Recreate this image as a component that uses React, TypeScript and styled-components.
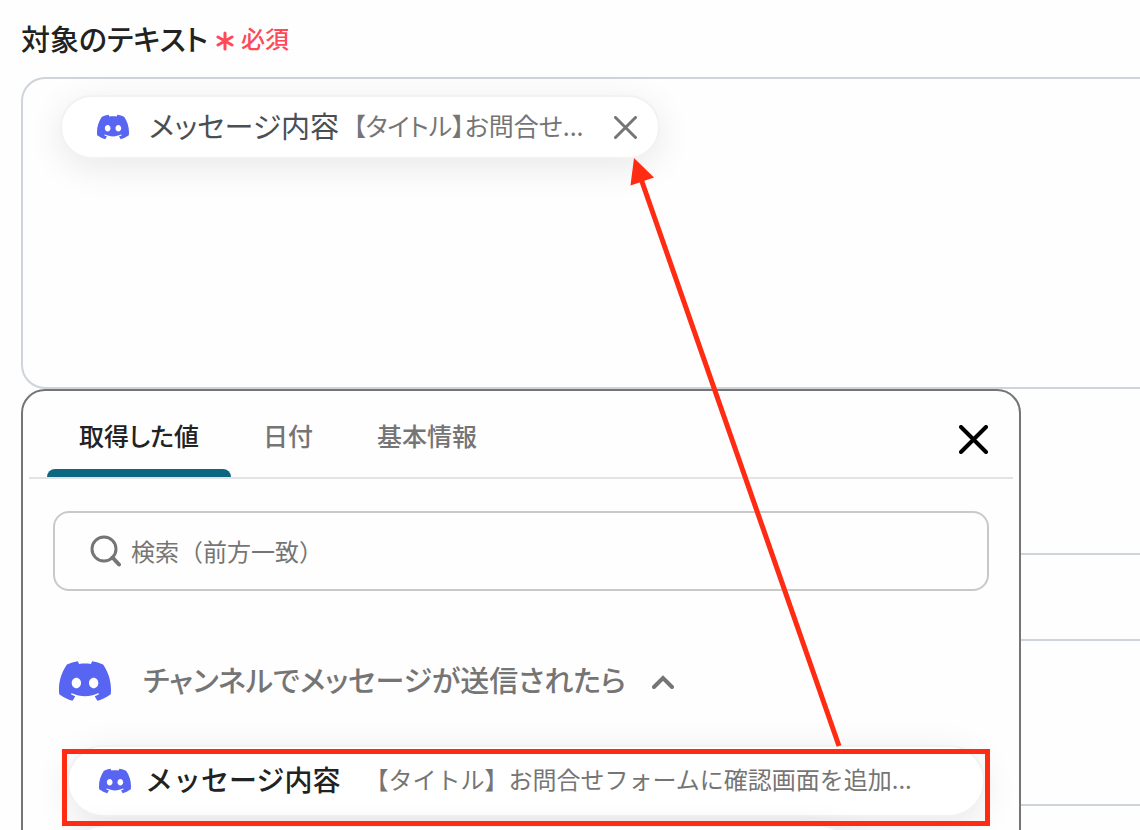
import React from "react";
import styled, { createGlobalStyle } from "styled-components";
import { SiDiscord } from "react-icons/si";

const color = {
  text: "#222222",
  slate: "#4a4f55",
  muted: "#757575",
  line: "#ced4da",
  required: "#ff4858",
  accent: "#0c6780",
  discord: "#5865f2",
  marker: "#ff2b12",
};

const GlobalStyle = createGlobalStyle`
  *, *::before, *::after { box-sizing: border-box; }
  body {
    margin: 0;
    background: #fefefe;
    color: ${color.text};
    font-family: "Noto Sans CJK JP", "Noto Sans", sans-serif;
    font-size: 24px;
    line-height: 36px;
  }
  button, input { font: inherit; color: inherit; }
`;

const Page = styled.main`
  position: relative;
  height: 100vh;
  overflow: hidden;
  padding: 18px 0 0 21px;
`;

const LabelRow = styled.div`
  display: flex;
  align-items: center;
  gap: 8px;
  height: 40px;
  margin-bottom: 19px;
`;

const FieldLabel = styled.h2`
  margin: 0;
  font-size: 29px;
  line-height: 40px;
  font-weight: 500;
  font-feature-settings: "palt";
`;

const Required = styled.span`
  display: flex;
  align-items: center;
  gap: 7px;
  color: ${color.required};
  font-weight: 500;

  svg {
    margin-top: 6px;
  }
`;

const TextArea = styled.div`
  display: flex;
  align-items: flex-start;
  height: 312px;
  padding: 16px 37px;
  border: 2px solid ${color.line};
  border-right: 0;
  border-radius: 24px 0 0 24px;
`;

const pill = `
  display: flex;
  align-items: center;
  border: 2px solid #f2f2f2;
  border-radius: 36px;
  background: #ffffff;
  box-shadow: 0 8px 36px rgba(0, 0, 0, 0.09);
`;

const Chip = styled.div`
  ${pill}
  width: 600px;
  height: 64px;
  padding: 0 21px 0 35px;
`;

const ChipName = styled.span`
  margin-left: 20px;
  padding-bottom: 4px;
  color: ${color.slate};
  font-size: 29px;
  font-feature-settings: "palt";
  white-space: nowrap;
`;

const ChipValue = styled.span`
  flex: 1;
  margin-left: 14px;
  padding-bottom: 4px;
  color: ${color.muted};
  font-size: 25px;
  font-feature-settings: "palt";
  white-space: nowrap;
`;

const IconButton = styled.button`
  display: flex;
  padding: 0;
  border: 0;
  background: none;
  cursor: pointer;
`;

const FormBody = styled.div`
  position: relative;
`;

const FormRow = styled.div<{ $height: number }>`
  height: ${(p) => p.$height}px;
  border-bottom: 2px solid ${color.line};
`;

const Popover = styled.section`
  position: absolute;
  top: 0;
  left: 0;
  width: 100%;
  max-width: 1000px;
  height: 520px;
  padding: 0 6px;
  border: 2px solid ${color.muted};
  border-radius: 24px 24px 0 0;
  background: #fefefe;
`;

const TabBar = styled.div`
  display: flex;
  align-items: stretch;
  height: 88px;
  padding: 0 25px 0 18px;
  border-bottom: 2px solid #e3e3e3;
`;

const Tab = styled.button<{ $active?: boolean }>`
  position: relative;
  padding: 2px 32px 0;
  border: 0;
  background: none;
  color: ${(p) => (p.$active ? color.text : color.muted)};
  font-size: 25px;
  font-weight: 500;
  font-feature-settings: "palt";
  white-space: nowrap;
  cursor: pointer;

  &::after {
    content: "";
    position: absolute;
    inset: auto 0 0;
    height: 8px;
    border-radius: 8px 8px 0 0;
    background: ${(p) => (p.$active ? color.accent : "transparent")};
  }
`;

const ClosePanel = styled(IconButton)`
  align-items: center;
  margin-left: auto;
  padding-top: 10px;
`;

const SearchBox = styled.label`
  display: flex;
  align-items: center;
  gap: 10px;
  height: 80px;
  margin: 32px 24px 0;
  padding: 0 32px 0 34px;
  border: 2px solid #c9c9c9;
  border-radius: 16px;
`;

const SearchInput = styled.input`
  flex: 1;
  min-width: 0;
  padding: 0;
  border: 0;
  outline: 0;
  background: none;

  &::placeholder {
    color: ${color.muted};
    opacity: 1;
  }
`;

const GroupToggle = styled.button`
  display: flex;
  align-items: center;
  margin: 64px 0 0 30px;
  padding: 0;
  border: 0;
  background: none;
  color: ${color.muted};
  font-size: 29px;
  font-weight: 500;
  font-feature-settings: "palt";
  white-space: nowrap;
  cursor: pointer;
`;

const GroupName = styled.span`
  margin: 0 26px 0 32px;
  padding-bottom: 4px;
`;

const Options = styled.ul`
  display: flex;
  flex-direction: column;
  gap: 8px;
  margin: 38px 28px 0 38px;
  padding: 0;
  list-style: none;
`;

const OptionItem = styled.li`
  position: relative;
`;

const Option = styled.button<{ $width?: string }>`
  ${pill}
  width: ${(p) => p.$width ?? "100%"};
  height: 72px;
  padding: 0 30px;
  text-align: left;
  white-space: nowrap;
  cursor: pointer;
`;

const OptionName = styled.span`
  margin-left: 14px;
  padding-bottom: 4px;
  font-size: 28px;
  font-weight: 500;
`;

const OptionValue = styled.span`
  margin-left: 24px;
  padding-bottom: 4px;
  color: ${color.muted};
`;

const Highlight = styled.div`
  position: absolute;
  z-index: 1;
  inset: 4px -5px -9px -5px;
  border: 5px solid ${color.marker};
  pointer-events: none;
`;

const Arrow = styled.svg`
  position: absolute;
  top: 0;
  left: 0;
  pointer-events: none;
`;

function Cross({ size, width, stroke }: { size: number; width: number; stroke: string }) {
  const a = width / 2;
  const b = size - a;
  return (
    <svg width={size} height={size} aria-hidden="true">
      <path d={`M${a} ${a}L${b} ${b}M${b} ${a}L${a} ${b}`} stroke={stroke} strokeWidth={width} strokeLinecap="round" />
    </svg>
  );
}

export default function App() {
  return (
    <>
      <GlobalStyle />
      <Page>
        <LabelRow>
          <FieldLabel>対象のテキスト</FieldLabel>
          <Required>
            <svg width="18" height="20" viewBox="0 0 18 20" aria-hidden="true">
              <path d="M9 2v16M2 6l14 8M16 6L2 14" stroke="currentColor" strokeWidth="3" strokeLinecap="round" />
            </svg>
            必須
          </Required>
        </LabelRow>

        <TextArea>
          <Chip>
            <SiDiscord size={32} color={color.discord} />
            <ChipName>メッセージ内容</ChipName>
            <ChipValue>【タイトル】お問合せ...</ChipValue>
            <IconButton type="button" aria-label="削除">
              <Cross size={23} width={3} stroke={color.muted} />
            </IconButton>
          </Chip>
        </TextArea>

        <FormBody>
          <FormRow $height={166} />
          <FormRow $height={86} />
          <FormRow $height={165} />

          <Popover>
            <TabBar role="tablist">
              <Tab type="button" role="tab" aria-selected="true" $active>取得した値</Tab>
              <Tab type="button" role="tab" aria-selected="false">日付</Tab>
              <Tab type="button" role="tab" aria-selected="false">基本情報</Tab>
              <ClosePanel type="button" aria-label="閉じる">
                <Cross size={29} width={4} stroke="#000000" />
              </ClosePanel>
            </TabBar>

            <SearchBox>
              <svg width="32" height="32" viewBox="0 0 32 32" fill="none" aria-hidden="true">
                <circle cx="15" cy="14" r="12" stroke={color.muted} strokeWidth="3" />
                <path d="M23.5 22.5L30 29.5" stroke={color.muted} strokeWidth="4" strokeLinecap="round" />
              </svg>
              <SearchInput type="text" aria-label="検索" placeholder="検索（前方一致）" />
            </SearchBox>

            <GroupToggle type="button" aria-expanded="true">
              <SiDiscord size={52} color={color.discord} />
              <GroupName>チャンネルでメッセージが送信されたら</GroupName>
              <svg width="22" height="16" viewBox="0 0 22 16" fill="none" aria-hidden="true">
                <path d="M2 14L11 5L20 14" stroke="currentColor" strokeWidth="4" strokeLinecap="round" />
              </svg>
            </GroupToggle>

            <Options>
              <OptionItem>
                <Option type="button">
                  <SiDiscord size={32} color={color.discord} />
                  <OptionName>メッセージ内容</OptionName>
                  <OptionValue>【タイトル】お問合せフォームに確認画面を追加...</OptionValue>
                </Option>
                <Highlight />
              </OptionItem>
              <OptionItem>
                <Option type="button" $width="86%" aria-label="次の項目" />
              </OptionItem>
            </Options>
          </Popover>
        </FormBody>

        <Arrow width="1140" height="830" viewBox="0 0 1140 830" aria-hidden="true">
          <path d="M640 176L839 746" stroke={color.marker} strokeWidth="5" />
          <path d="M634 158L654 177.5L630.5 185.5Z" fill={color.marker} />
        </Arrow>
      </Page>
    </>
  );
}
